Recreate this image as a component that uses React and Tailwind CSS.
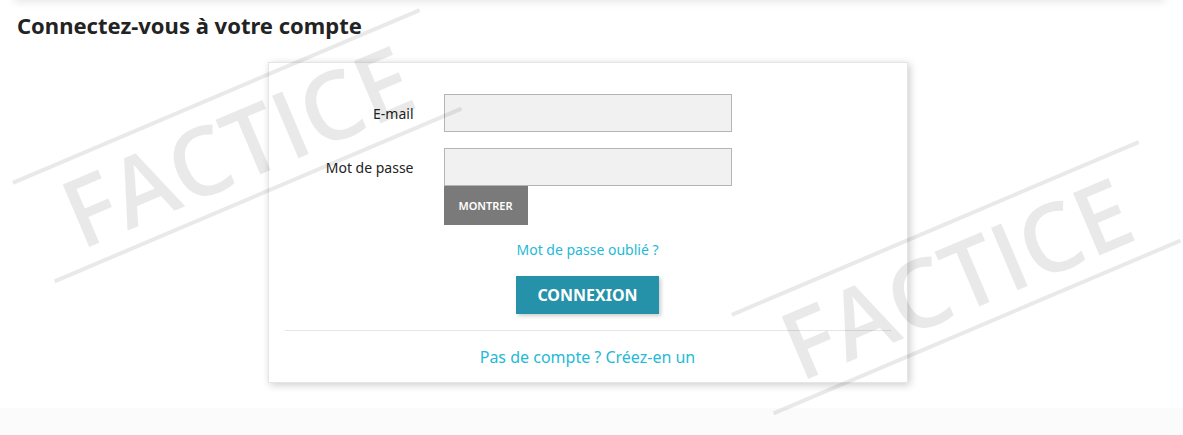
const font = { fontFamily: '"Noto Sans", "Open Sans", sans-serif' };

function Stamp({ className }) {
  return (
    <div
      className={`pointer-events-none absolute w-[442px] h-[112px] origin-top-left -rotate-[23deg] ${className}`}
    >
      <div className="h-[4px] w-full bg-black/[0.085]" />
      <div
        className="absolute left-0 right-0 top-[7px] text-center text-[95px] leading-none font-semibold text-black/[0.085]"
        style={{ fontFamily: '"Open Sans", sans-serif' }}
      >
        FACTICE
      </div>
      <div className="absolute left-0 top-[107px] h-[4px] w-full bg-black/[0.085]" />
    </div>
  );
}

export default function App() {
  return (
    <div className="relative h-[435px] overflow-hidden bg-white text-[#232323]" style={font}>
      <div className="ml-[12px] -mt-[10px] h-[10px] w-[1151px] bg-white shadow-[2px_2px_8px_0_rgba(0,0,0,0.1)]" />

      <div className="ml-[12px] w-[1151px]">
        <h1 className="pl-[5px] pt-[12px] text-[22px] leading-[26px] font-bold">
          Connectez-vous à votre compte
        </h1>

        <div className="mx-auto mt-[24px] w-[640px] border border-black/10 bg-white pt-[31px] pb-[14px] px-[16px] shadow-[2px_2px_8px_0_rgba(0,0,0,0.2)]">
          <div className="-mx-[16px]">
            <div className="flex items-start">
              <label className="flex h-[38px] w-[145px] items-center justify-end text-[14px]">
                E-mail
              </label>
              <input
                type="email"
                className="ml-[30px] h-[38px] w-[288px] border border-black/25 bg-[#f1f1f1] px-3 outline-none"
              />
            </div>

            <div className="mt-[16px] flex items-start">
              <label className="flex h-[38px] w-[145px] items-center justify-end text-[14px]">
                Mot de passe
              </label>
              <div className="ml-[30px] flex flex-col items-start">
                <input
                  type="password"
                  className="h-[38px] w-[288px] border border-black/25 bg-[#f1f1f1] px-3 outline-none"
                />
                <button className="h-[39px] w-[84px] bg-[#7a7a7a] pt-[1px] text-[11px] font-semibold text-white uppercase">
                  Montrer
                </button>
              </div>
            </div>
          </div>

          <div className="mt-[15px] text-center text-[14px] leading-[20px] text-[#24b9d7]">
            <a href="#">Mot de passe oublié ?</a>
          </div>

          <div className="mt-[16px] flex justify-center">
            <button className="h-[38px] w-[143px] bg-[#2592a9] text-[16px] font-bold text-white uppercase shadow-[2px_2px_4px_0_rgba(0,0,0,0.2)]">
              Connexion
            </button>
          </div>

          <hr className="mt-[16px] border-t border-[#e5e5e5]" />

          <div className="mt-[15px] text-center text-[16px] leading-[22px] text-[#24b9d7]">
            <a href="#">Pas de compte ? Créez-en un</a>
          </div>
        </div>
      </div>

      <div className="mt-[25px] h-[40px] bg-[#fbfbfb]" />

      <Stamp className="left-[12px] top-[181px]" />
      <Stamp className="left-[731px] top-[313px]" />
    </div>
  );
}
